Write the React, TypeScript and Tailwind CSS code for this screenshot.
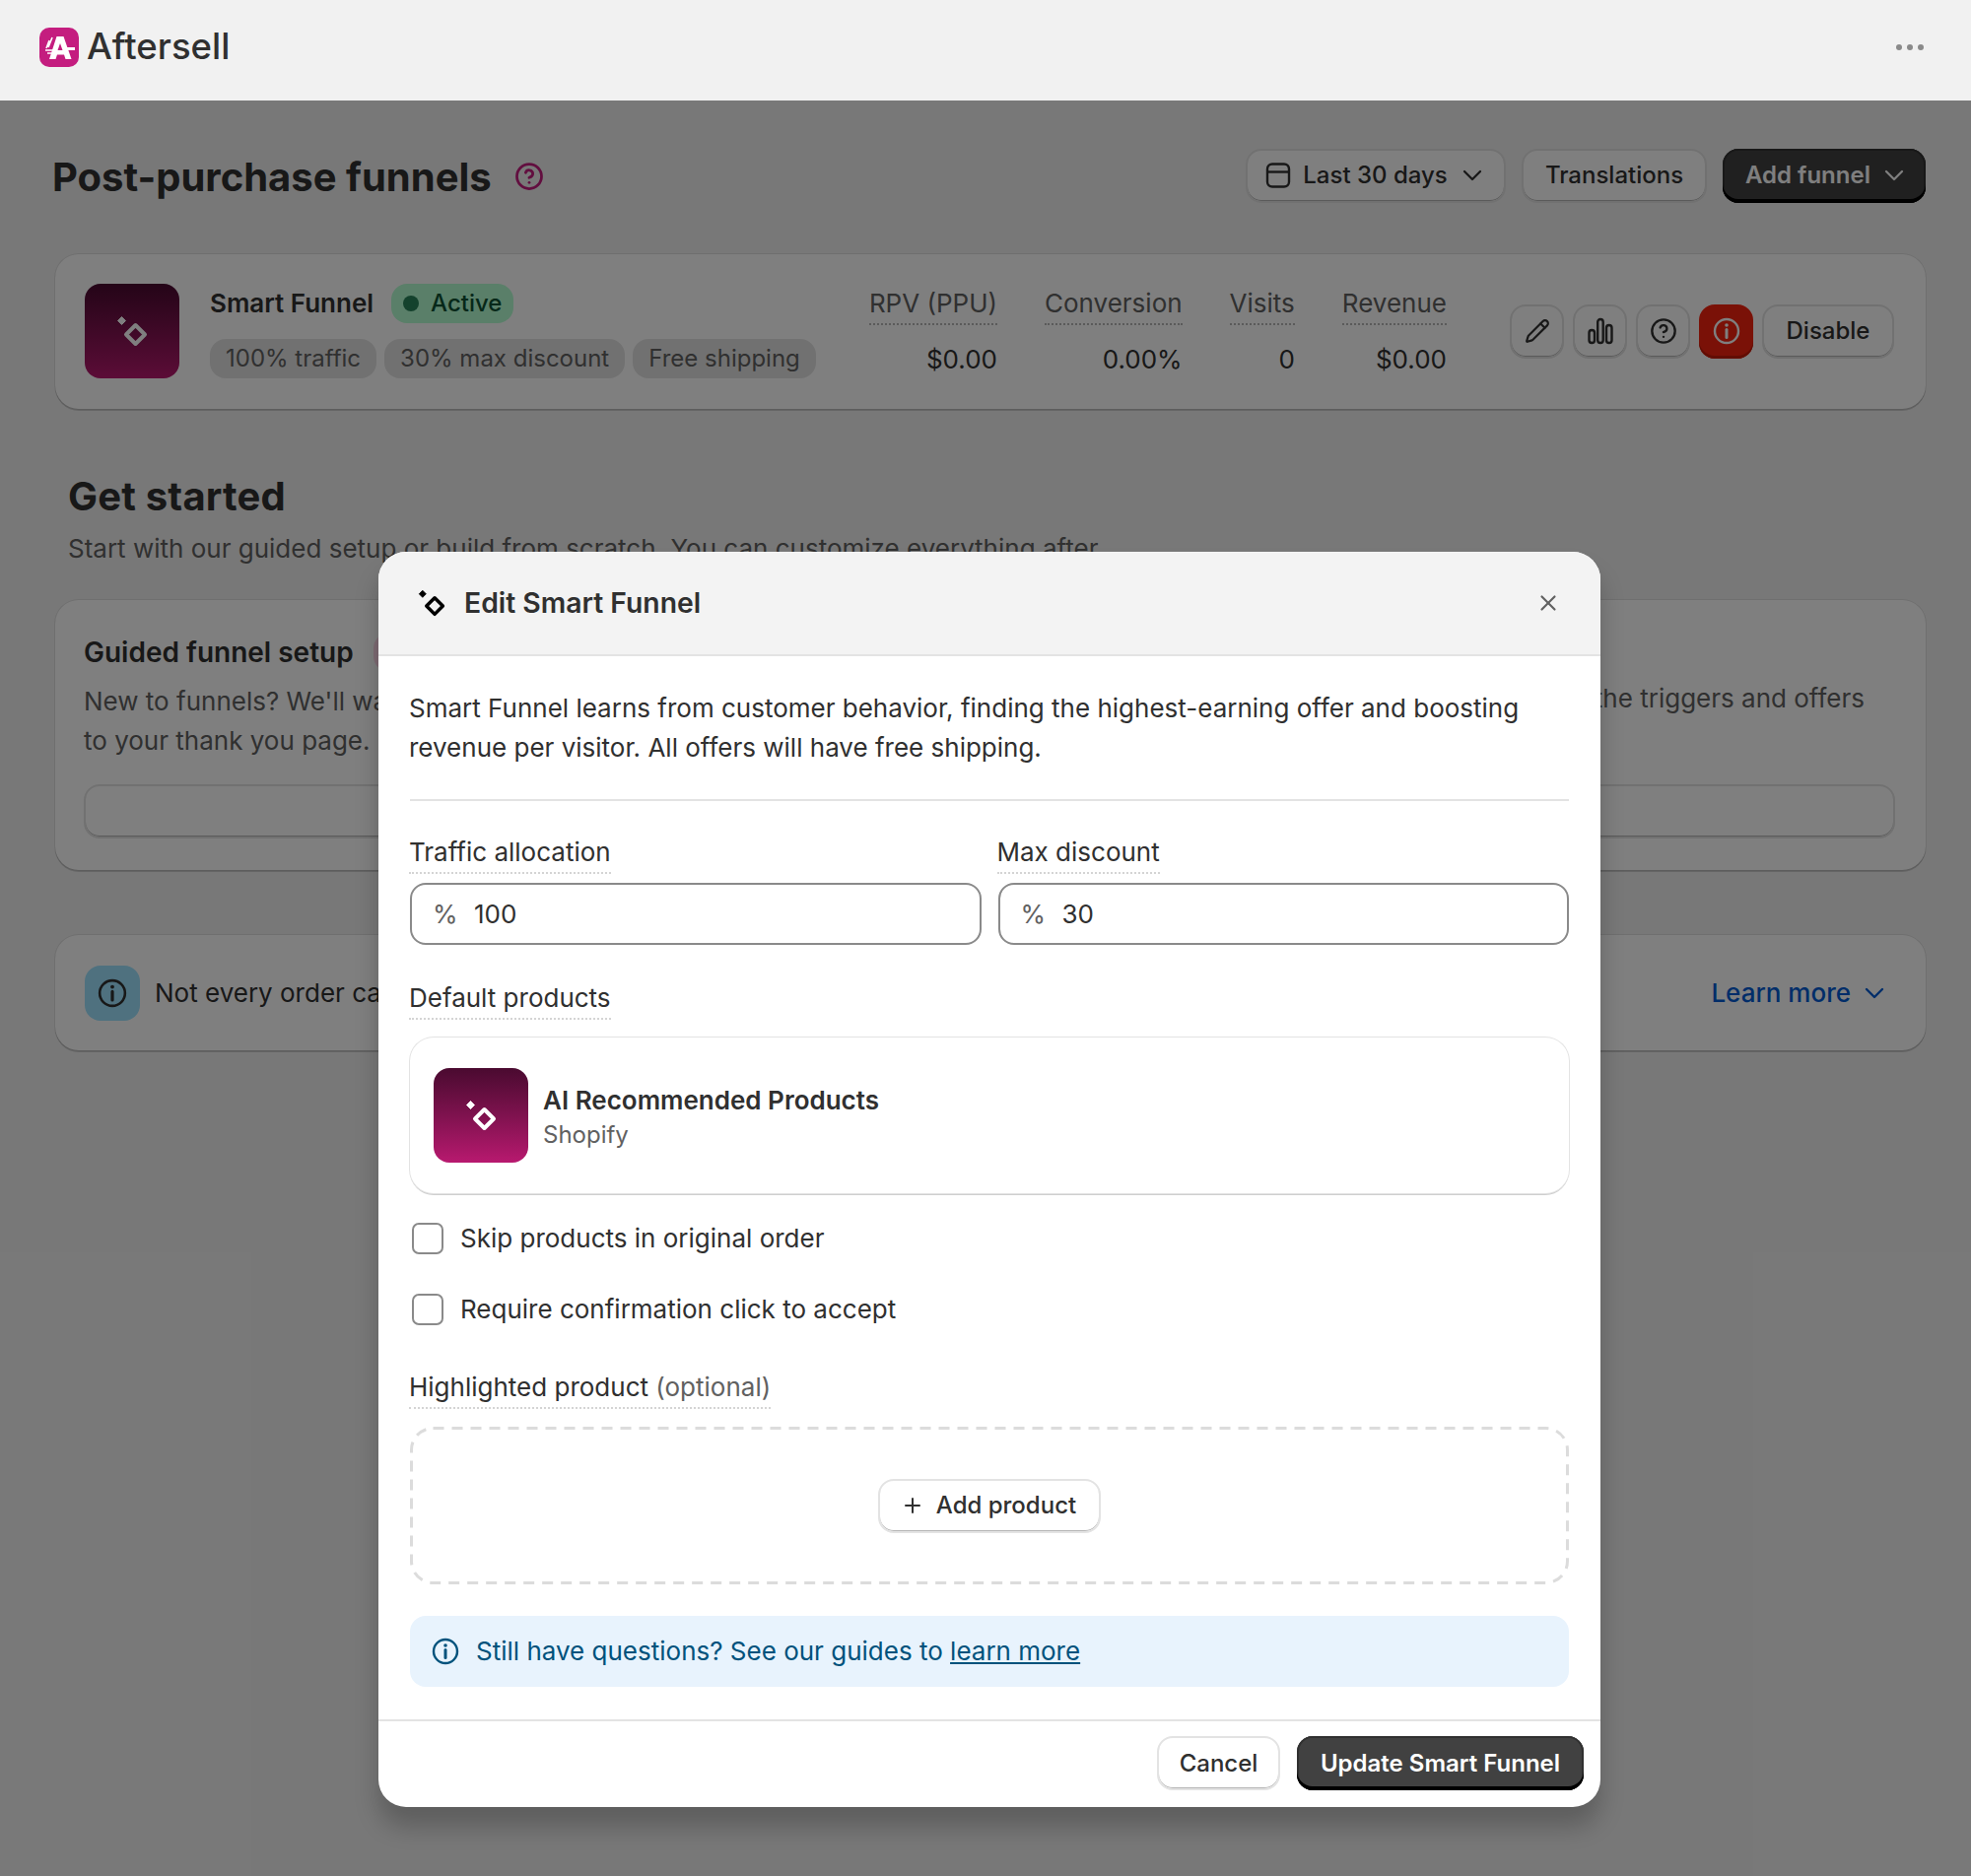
import { ChevronDown, CircleHelp, Pencil, Plus, X } from "lucide-react";
import type { ReactNode } from "react";

const stats = [
  { label: "RPV (PPU)", value: "$0.00" },
  { label: "Conversion", value: "0.00%" },
  { label: "Visits", value: "0" },
  { label: "Revenue", value: "$0.00" },
];

function Sparkle({ className }: { className?: string }) {
  return (
    <svg viewBox="0 0 32 32" className={className} fill="none">
      <path d="M5.500 1.500 9.500 5.500 5.500 9.500 1.500 5.500Z" fill="currentColor" stroke="currentColor" strokeLinejoin="round" />
      <path d="M19.500 10 29 19.500 19.500 29 10 19.500Z" stroke="currentColor" strokeWidth="4" strokeLinejoin="round" />
    </svg>
  );
}

function InfoIcon({ className }: { className?: string }) {
  return (
    <svg viewBox="0 0 28 28" className={className} fill="none" stroke="currentColor">
      <circle cx="14" cy="14" r="12" strokeWidth="2.400" />
      <path d="M14 12.500v8" strokeWidth="3" strokeLinecap="round" />
      <circle cx="14" cy="8" r="1.800" fill="currentColor" stroke="none" />
    </svg>
  );
}

function Logo() {
  return (
    <svg viewBox="0 0 40 40" className="h-10 w-10">
      <rect width="40" height="40" rx="10" fill="#c41d7f" />
      <path
        fillRule="evenodd"
        d="M17.500 9h7l8 23h-6l-1.500-4.500h-7L16.500 32h-6.500ZM21 16l-2.500 7h5Z"
        fill="#fff"
      />
      <path d="M24 20h12v3H24Z" fill="#fff" />
      <path d="M13 10 9 20M10 13l-3 8M6 23h8M8 26h5" stroke="#fff" strokeWidth="1.600" />
    </svg>
  );
}

function CalendarIcon() {
  return (
    <svg viewBox="0 0 26 28" className="h-7 w-[26px]" fill="none" stroke="currentColor" strokeWidth="2.400">
      <rect x="2" y="2.500" width="22" height="23" rx="5" />
      <path d="M2 10.500h22" />
    </svg>
  );
}

function BarsIcon() {
  return (
    <svg viewBox="0 0 28 28" className="h-7 w-7" fill="none" stroke="currentColor" strokeWidth="2.400">
      <rect x="2.500" y="13" width="5.500" height="13" rx="2.700" />
      <rect x="11.200" y="2" width="5.500" height="24" rx="2.700" />
      <rect x="20" y="8" width="5.500" height="18" rx="2.700" />
    </svg>
  );
}

function Dotted({ children }: { children: ReactNode }) {
  return (
    <span className="-ml-px inline-block h-[42px] border-b-2 border-dotted border-[#d4d4d4] leading-[40px]">
      {children}
    </span>
  );
}

function OutlineButton({ children, className = "" }: { children: ReactNode; className?: string }) {
  return (
    <button className={`flex h-[55px] items-center justify-center rounded-2xl border-2 border-[#e3e3e3] bg-white text-[24px] font-medium text-[#303030] shadow-[inset_0_-1px_0_#b5b5b5] ${className}`}>
      {children}
    </button>
  );
}

function DarkButton({ children, className = "" }: { children: ReactNode; className?: string }) {
  return (
    <button className={`flex h-[55px] items-center rounded-2xl bg-[#414141] text-[24px] font-semibold text-white shadow-[inset_0_-4px_0_#000,inset_0_0_0_2px_#303030,inset_0_2px_0_#5c5c5c] ${className}`}>
      {children}
    </button>
  );
}

function Card({ children, className = "" }: { children: ReactNode; className?: string }) {
  return (
    <div className={`rounded-3xl bg-white shadow-[0_0_0_1px_rgba(0,0,0,0.08),0_2px_0_rgba(0,0,0,0.16)] ${className}`}>
      {children}
    </div>
  );
}

function NumberField({ value }: { value: string }) {
  return (
    <div className="flex h-[63px] items-center rounded-2xl border-2 border-[#8a8a8a] bg-white pl-[21px] text-[#303030]">
      <span className="w-[42px] text-[#616161]">%</span>
      <span>{value}</span>
    </div>
  );
}

function CheckRow({ label, className = "" }: { label: string; className?: string }) {
  return (
    <div className={`flex h-10 items-center text-[#303030] ${className}`}>
      <span className="ml-0.5 mr-[17px] h-[32px] w-[32px] rounded-[7px] border-2 border-[#8a8a8a] bg-white" />
      {label}
    </div>
  );
}

export default function App() {
  return (
    <div className="relative h-[1904px] overflow-hidden bg-[#f1f1f1] font-['Inter',sans-serif] text-[26px] leading-[40px] text-[#303030]">
      <header className="relative z-20 flex h-[102px] items-center justify-between bg-[#f1f1f1] pb-[6px] pl-10 pr-12">
        <div className="flex items-center gap-2">
          <Logo />
          <span className="-mt-[2px] text-[36.500px] font-medium leading-none">Aftersell</span>
        </div>
        <div className="flex gap-[5px]">
          <span className="h-[6px] w-[6px] rounded-full bg-[#8a8a8a]" />
          <span className="h-[6px] w-[6px] rounded-full bg-[#8a8a8a]" />
          <span className="h-[6px] w-[6px] rounded-full bg-[#8a8a8a]" />
        </div>
      </header>

      <main className="pl-[56px] pr-[46px] pt-[49px]">
        <div className="flex h-[54px] items-center justify-between">
          <div className="flex items-center gap-[23px]">
            <h1 className="-ml-[3px] pt-[4px] text-[40px] font-bold leading-none">Post-purchase funnels</h1>
            <CircleHelp className="mt-0.5 h-[30px] w-[30px] text-[#c41d7f]" strokeWidth={2.200} />
          </div>
          <div className="flex gap-4">
            <OutlineButton className="w-[264px] gap-3 pl-[2px]">
              <CalendarIcon />
              Last 30 days
              <ChevronDown className="-ml-[3px] h-8 w-8" strokeWidth={1.700} />
            </OutlineButton>
            <OutlineButton className="w-[188px]">Translations</OutlineButton>
            <DarkButton className="w-[206px] gap-2 pl-[23px]">
              Add funnel
              <ChevronDown className="h-8 w-8" strokeWidth={1.700} />
            </DarkButton>
          </div>
        </div>

        <Card className="mt-[53px] flex h-[157px] items-center justify-between pb-px pl-[30px] pr-[32px]">
          <div className="flex items-center gap-[31px]">
            <div className="flex h-24 w-24 items-center justify-center rounded-2xl bg-gradient-to-b from-[#4a0a30] to-[#b8196f] text-white">
              <Sparkle className="h-8 w-8" />
            </div>
            <div>
              <div className="flex h-10 items-center gap-[18px]">
                <span className="font-semibold">Smart Funnel</span>
                <span className="flex h-10 items-center gap-3 rounded-2xl bg-[#b4fed2] px-3 text-[24px] font-medium text-[#0c5132]">
                  <span className="h-4 w-4 rounded-full bg-[#29845a]" />
                  Active
                </span>
              </div>
              <div className="mt-4 flex gap-2 text-[24px] text-[#616161]">
                <span className="flex h-10 items-center rounded-2xl bg-[#e3e3e3] px-4">100% traffic</span>
                <span className="flex h-10 items-center rounded-2xl bg-[#e3e3e3] px-4">30% max discount</span>
                <span className="flex h-10 items-center rounded-2xl bg-[#e3e3e3] px-4">Free shipping</span>
              </div>
            </div>
          </div>
          <div className="flex items-center">
            <div className="mr-[64px] flex gap-12">
              {stats.map((s) => (
                <div key={s.label} className="flex flex-col items-end">
                  <span className="h-[42px] border-b-2 border-dotted border-[#b5b5b5] leading-[40px] text-[#616161]">{s.label}</span>
                  <span className="mt-[15px]">{s.value}</span>
                </div>
              ))}
            </div>
            <div className="flex gap-[9px]">
              <OutlineButton className="w-[55px]"><Pencil className="h-[26px] w-[26px]" strokeWidth={2} /></OutlineButton>
              <OutlineButton className="w-[55px]"><BarsIcon /></OutlineButton>
              <OutlineButton className="w-[55px]"><CircleHelp className="h-7 w-7" strokeWidth={2} /></OutlineButton>
              <button className="flex h-[55px] w-[55px] items-center justify-center rounded-2xl bg-[#f5230f] text-white shadow-[inset_0_-3px_0_#c41a08]">
                <InfoIcon className="h-7 w-7" />
              </button>
              <OutlineButton className="w-[134px]">Disable</OutlineButton>
            </div>
          </div>
        </Card>

        <h2 className="ml-[13px] mt-[69px] text-[40px] font-bold leading-[40px] tracking-[0.2px]">Get started</h2>
        <p className="ml-[13px] mt-[13px] text-[#616161]">
          Start with our guided setup or build from scratch. You can customize everything after.
        </p>

        <div className="mt-[32px] grid grid-cols-2 gap-4">
          <Card className="h-[274px] pl-[29px] pr-[30px] pt-[33px]">
            <div className="flex h-10 items-center gap-5">
              <span className="text-[28px] font-semibold">Guided funnel setup</span>
              <span className="rounded-2xl bg-[#ffd6e8] px-3 text-[24px] text-[#8a1a55]">Recommended</span>
            </div>
            <p className="mt-[10px] text-[#616161]">
              New to funnels? We'll walk you through adding your first funnel
              <br />
              to your thank you page.
            </p>
            <OutlineButton className="mt-[24px] w-full">Start guided setup</OutlineButton>
          </Card>
          <Card className="h-[274px] pl-[30px] pr-[31px] pt-[33px]">
            <div className="flex h-10 items-center text-[28px] font-semibold">Build from scratch</div>
            <p className="mt-[7px] pr-[31px] text-right text-[#616161]">Create your own funnel and choose the triggers and offers</p>
            <OutlineButton className="mt-[67px] w-full">Create funnel</OutlineButton>
          </Card>
        </div>

        <Card className="mt-[66px] flex h-[117px] items-center justify-between pl-[30px] pr-[36px]">
          <div className="flex items-center gap-[15px]">
            <div className="flex h-14 w-14 items-center justify-center rounded-2xl bg-[#9ee3ff]">
              <InfoIcon className="h-[30px] w-[30px]" />
            </div>
            <span>Not every order can show a post-purchase offer.</span>
          </div>
          <div className="flex items-center gap-2 font-medium text-[#005bd3]">
            Learn more
            <ChevronDown className="h-8 w-8" strokeWidth={1.800} />
          </div>
        </Card>
      </main>

      {/* dim layer and modal sit over the page */}
      <div className="absolute inset-x-0 bottom-0 top-[102px] z-10 bg-black/50" />

      <div className="absolute left-[384px] top-[560px] z-20 flex h-[1274px] w-[1240px] flex-col overflow-hidden rounded-[28px] bg-white shadow-[0_20px_24px_rgba(0,0,0,0.22)]">
        <div className="flex h-[106px] shrink-0 items-center justify-between border-b-2 border-[#e3e3e3] bg-[#f3f3f3] pb-px pl-10 pr-10">
          <div className="flex items-center gap-[19px]">
            <Sparkle className="h-7 w-7 text-black" />
            <span className="text-[28.300px] font-semibold">Edit Smart Funnel</span>
          </div>
          <X className="h-[26px] w-[26px] text-[#616161]" strokeWidth={2} />
        </div>

        <div className="flex flex-1 flex-col px-[32px] pt-[33px]">
          <p className="-ml-px">
            Smart Funnel learns from customer behavior, finding the highest-earning offer and boosting
            <br />
            revenue per visitor. All offers will have free shipping.
          </p>
          <div className="mt-[32px] h-0.5 shrink-0 bg-[#e3e3e3]" />

          <div className="mt-8 grid grid-cols-2 gap-[17px]">
            <div>
              <Dotted>Traffic allocation</Dotted>
              <div className="mt-[9px]"><NumberField value="100" /></div>
            </div>
            <div>
              <Dotted>Max discount</Dotted>
              <div className="mt-[9px]"><NumberField value="30" /></div>
            </div>
          </div>

          <div className="mt-[34px]"><Dotted>Default products</Dotted></div>
          <div className="mt-[18px] flex h-[158px] items-center gap-[15px] rounded-3xl bg-white pb-px pl-6 shadow-[0_0_0_1px_#e3e3e3,0_2px_0_#cfcfcf]">
            <div className="flex h-24 w-24 items-center justify-center rounded-2xl bg-gradient-to-b from-[#4a0a30] to-[#b8196f] text-white">
              <Sparkle className="h-8 w-8" />
            </div>
            <div className="pt-1">
              <div className="font-semibold leading-[35px]">AI Recommended Products</div>
              <div className="text-[24px] leading-[35px] text-[#616161]">Shopify</div>
            </div>
          </div>

          <CheckRow className="mt-[26px]" label="Skip products in original order" />
          <CheckRow className="mt-8" label="Require confirmation click to accept" />

          <div className="mt-[39px]">
            <Dotted>
              Highlighted product <span className="text-[#616161]">(optional)</span>
            </Dotted>
          </div>
          <div className="relative mt-[18px] flex h-40 items-center justify-center">
            <svg viewBox="0 0 1176 160" className="absolute inset-0 h-full w-full" fill="none">
              <rect x="1.500" y="1.500" width="1173" height="157" rx="22" stroke="#dcdcdc" strokeWidth="3" strokeDasharray="11 8" />
            </svg>
            <OutlineButton className="relative w-[226px] gap-3 pr-[2px]">
              <Plus className="h-6 w-6" strokeWidth={2} />
              Add product
            </OutlineButton>
          </div>

          <div className="mt-8 flex h-[72px] items-center gap-[17px] rounded-2xl bg-[#e8f3fd] pl-[22px] text-[#00527c]">
            <InfoIcon className="h-7 w-7" />
            <span>
              Still have questions? See our guides to <span className="underline">learn more</span>
            </span>
          </div>
        </div>

        <div className="flex h-[89px] shrink-0 justify-end gap-[17px] border-t-2 border-[#e3e3e3] pr-[17px] pt-[15px]">
          <OutlineButton className="w-[125px]">Cancel</OutlineButton>
          <DarkButton className="w-[291px] justify-center">Update Smart Funnel</DarkButton>
        </div>
      </div>
    </div>
  );
}
